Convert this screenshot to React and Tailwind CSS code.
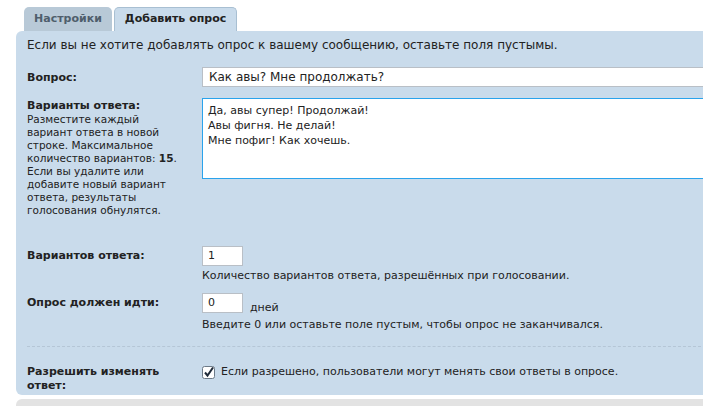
export default function App() {
  const f = { fontFamily: "Verdana, 'DejaVu Sans', sans-serif" };
  return (
    <div className="w-[703px] h-[406px] overflow-hidden bg-white text-[#222]" style={f}>
      <div className="pl-4 pt-[7px]">
        <div className="flex pl-2 gap-[2px] h-6">
          <div className="px-[10px] bg-[#b8c9d7] rounded-t-[5px] text-[11px] font-bold text-[#4f5e6c] flex items-center">Настройки</div>
          <div className="px-[10px] bg-[#c9dbeb] border border-b-0 border-[#a8bfd2] rounded-t-[5px] text-[11px] font-bold text-[#222] flex items-center">Добавить опрос</div>
        </div>
        <div className="bg-[#c9dbeb] rounded-bl-[6px] rounded-tl-[6px] w-[720px] h-[364px] pl-[11px] pt-[5px]">
          <div className="text-[12px] leading-[18px]">Если вы не хотите добавлять опрос к вашему сообщению, оставьте поля пустымы.</div>
          <div className="flex mt-[13px] items-start">
            <div className="w-[175px] text-[11px] font-bold pt-[3px]">Вопрос:</div>
            <div className="flex-1 h-[20px] bg-white border border-[#b9bfc6] text-[12px] px-[6px] leading-[18px]">Как авы? Мне продолжать?</div>
          </div>
          <div className="flex mt-[11px] items-start">
            <div className="w-[175px] text-[10.5px] leading-[13px] pt-[1px]">
              <div className="font-bold text-[11px] leading-[14px]">Варианты ответа:</div>
              <div>Разместите каждый<br />вариант ответа в новой<br />строке. Максимальное<br />количество вариантов: <b>15</b>.<br />Если вы удалите или<br />добавите новый вариант<br />ответа, результаты<br />голосования обнулятся.</div>
            </div>
            <div className="flex-1 h-[81px] bg-white border border-[#2aa3ec] text-[11px] leading-[15px] px-[5px] pt-[4px]">
              <div>Да, авы супер! Продолжай!</div>
              <div>Авы фигня. Не делай!</div>
              <div>Мне пофиг! Как хочешь.</div>
            </div>
          </div>
          <div className="flex mt-[29px] items-start">
            <div className="w-[175px] text-[11px] font-bold pt-[2px]">Вариантов ответа:</div>
            <div className="text-[11px] leading-[14px]">
              <div className="w-[41px] h-[20px] bg-white border border-[#b9bfc6] px-[5px] leading-[18px]">1</div>
              <div className="mt-[3px]">Количество вариантов ответа, разрешённых при голосовании.</div>
            </div>
          </div>
          <div className="flex mt-[10px] items-start">
            <div className="w-[175px] text-[11px] font-bold pt-[2px]">Опрос должен идти:</div>
            <div className="text-[11px] leading-[14px]">
              <div className="flex items-end gap-[7px]">
                <div className="w-[41px] h-[20px] bg-white border border-[#b9bfc6] px-[5px] leading-[18px]">0</div>
                <span className="-mb-[2px]">дней</span>
              </div>
              <div className="mt-[5px]">Введите 0 или оставьте поле пустым, чтобы опрос не заканчивался.</div>
            </div>
          </div>
          <div className="border-t border-dashed border-[#b5c6d6] mt-[14px] mr-[20px]" />
          <div className="flex mt-[18px] items-start">
            <div className="w-[175px] text-[11px] font-bold leading-[14px]">Разрешить изменять<br />ответ:</div>
            <div className="flex items-center gap-[6px] text-[11px] leading-[14px]">
              <svg width="13" height="13" viewBox="0 0 13 13">
                <rect x="0.5" y="0.5" width="12" height="12" rx="2" fill="#fff" stroke="#6c7a88" />
                <path d="M3 6.5 L5.5 9.5 L11 1.5" fill="none" stroke="#1f2b3a" strokeWidth="2" />
              </svg>
              <span>Если разрешено, пользователи могут менять свои ответы в опросе.</span>
            </div>
          </div>
        </div>
        <div className="bg-[#e3e3e3] rounded-tl-[6px] h-[10px] mt-[4px]" />
      </div>
    </div>
  );
}
